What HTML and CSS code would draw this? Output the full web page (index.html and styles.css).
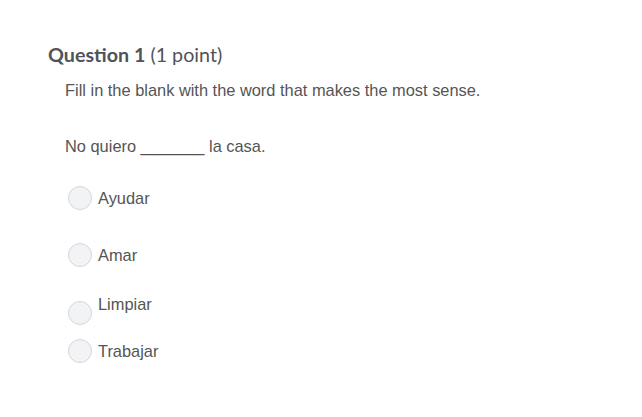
FILE: index.html
```html
<!DOCTYPE html>
<html>
<head>
<meta charset="utf-8">
<link rel="stylesheet" href="styles.css">
</head>
<body>
<div class="question">
  <h2 class="q-title"><span class="q-num">Question 1</span> <span class="q-pts">(1 point)</span></h2>
  <div class="q-body">
    <p class="prompt">Fill in the blank with the word that makes the most sense.</p>
    <p class="sentence">No quiero _______ la casa.</p>
    <ul class="options">
      <li class="opt opt-a"><span class="radio"></span><span class="label">Ayudar</span></li>
      <li class="opt opt-b"><span class="radio"></span><span class="label">Amar</span></li>
      <li class="opt opt-c"><span class="radio"></span><span class="label">Limpiar</span></li>
      <li class="opt opt-d"><span class="radio"></span><span class="label">Trabajar</span></li>
    </ul>
  </div>
</div>
</body>
</html>
```
FILE: styles.css
```css
html, body {
  margin: 0;
  padding: 0;
  background: #ffffff;
}
.question {
  padding: 42px 0 0 48px;
}
.q-title {
  margin: 0;
  font-family: Lato, "Open Sans", sans-serif;
  font-size: 19.7px;
  line-height: 26px;
  color: #505357;
  font-weight: normal;
}
.q-num {
  font-weight: bold;
}
.q-body {
  padding-left: 17px;
  font-family: "Liberation Sans", Arial, sans-serif;
  font-size: 16.4px;
  color: #555555;
}
.prompt {
  margin: 9px 0 0 0;
  line-height: 26px;
}
.sentence {
  margin: 30px 0 0 0;
  line-height: 26px;
}
.options {
  list-style: none;
  margin: 0;
  padding: 0 0 0 3px;
}
.opt {
  display: flex;
  align-items: center;
  gap: 6px;
  height: 24px;
}
.opt-a { margin-top: 27px; }
.opt-b { margin-top: 33px; }
.opt-c { margin-top: 34px; }
.opt-d { margin-top: 14px; }
.opt-c .label {
  position: relative;
  top: -9px;
}
.radio {
  width: 22px;
  height: 22px;
  border-radius: 50%;
  border: 1px solid #d3d6db;
  background: #f2f3f5;
  flex: none;
}
.label {
  line-height: 20px;
}
```
